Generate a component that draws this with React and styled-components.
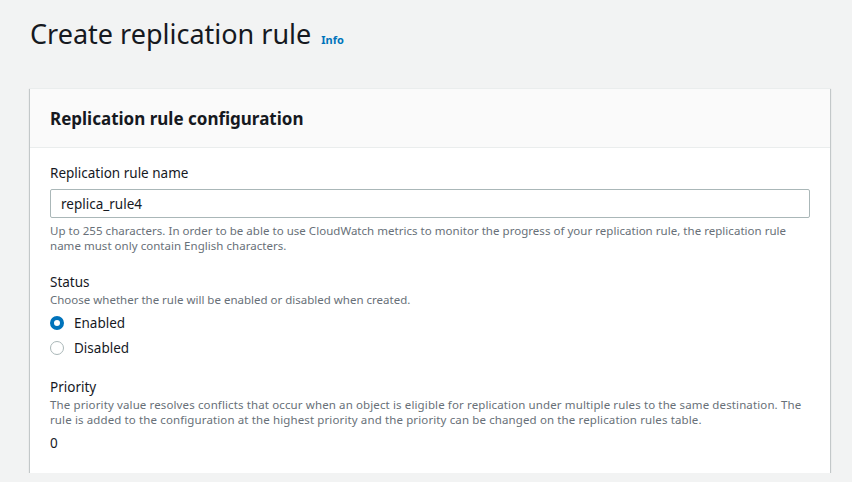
import React from "react";
import styled, { createGlobalStyle } from "styled-components";

const Global = createGlobalStyle`
  html, body { margin: 0; padding: 0; background: #f2f3f3; }
  body { font-family: "Noto Sans", "Open Sans", sans-serif; color: #16191f; }
`;

const Page = styled.div`
  padding: 14px 22px 0 30px;
  width: 852px;
  box-sizing: border-box;
`;

const TitleRow = styled.div`
  display: flex;
  align-items: baseline;
  gap: 10px;
  height: 74px;
`;

const Title = styled.h1`
  margin: 0;
  font-size: 27px;
  font-weight: 400;
  line-height: 40px;
  color: #16191f;
`;

const InfoLink = styled.a`
  font-size: 11px;
  font-weight: 700;
  color: #0073bb;
  text-decoration: none;
`;

const Panel = styled.section`
  width: 800px;
  background: #fff;
  box-shadow: 0 1px 1px 0 rgba(0, 28, 36, 0.3), 1px 1px 1px 0 rgba(0, 28, 36, 0.15), -1px 1px 1px 0 rgba(0, 28, 36, 0.15);
  border-top: 1px solid #eaeded;
`;

const PanelHeader = styled.div`
  background: #fafafa;
  border-bottom: 1px solid #eaeded;
  height: 58px;
  display: flex;
  align-items: center;
  padding: 0 20px;
`;

const PanelTitle = styled.h2`
  margin: 0;
  font-size: 17px;
  font-weight: 700;
  color: #16191f;
`;

const PanelBody = styled.div`
  padding: 16px 20px 20px;
  display: flex;
  flex-direction: column;
`;

const Field = styled.div`
  display: flex;
  flex-direction: column;
  margin-bottom: ${(p) => p.$mb || 0}px;
`;

const Label = styled.label`
  font-size: 13.5px;
  line-height: 19px;
  color: #16191f;
`;

const Desc = styled.div`
  font-size: 11.5px;
  line-height: 15px;
  color: #687078;
  letter-spacing: ${(p) => p.$ls || 0}px;
`;

const Input = styled.div`
  margin-top: 6px;
  height: 29px;
  width: 760px;
  box-sizing: border-box;
  border: 1px solid #aab7b8;
  border-radius: 2px;
  display: flex;
  align-items: center;
  padding: 0 10px;
  font-size: 13.5px;
  color: #16191f;
`;

const Helper = styled(Desc)`
  margin-top: 5px;
`;

const RadioGroup = styled.div`
  display: flex;
  flex-direction: column;
  gap: 6px;
  margin-top: 6px;
`;

const RadioRow = styled.div`
  display: flex;
  align-items: center;
  gap: 10px;
  height: 19px;
  font-size: 13.5px;
  color: #16191f;
`;

const RadioDot = styled.span`
  width: 14px;
  height: 14px;
  box-sizing: border-box;
  border-radius: 50%;
  border: ${(p) => (p.$checked ? "4px solid #0073bb" : "1px solid #aab7b8")};
  background: #fff;
`;

const Value = styled.div`
  margin-top: 7px;
  font-size: 13.5px;
  line-height: 19px;
  color: #16191f;
`;

export default function App() {
  return (
    <>
      <Global />
      <Page>
        <TitleRow>
          <Title>Create replication rule</Title>
          <InfoLink href="#">Info</InfoLink>
        </TitleRow>
        <Panel>
          <PanelHeader>
            <PanelTitle>Replication rule configuration</PanelTitle>
          </PanelHeader>
          <PanelBody>
            <Field $mb={20}>
              <Label>Replication rule name</Label>
              <Input>replica_rule4</Input>
              <Helper $ls={0.03}>
                Up to 255 characters. In order to be able to use CloudWatch metrics to monitor the progress of your replication rule, the replication rule name must only contain English characters.
              </Helper>
            </Field>
            <Field $mb={21}>
              <Label>Status</Label>
              <Desc>Choose whether the rule will be enabled or disabled when created.</Desc>
              <RadioGroup>
                <RadioRow>
                  <RadioDot $checked />
                  Enabled
                </RadioRow>
                <RadioRow>
                  <RadioDot />
                  Disabled
                </RadioRow>
              </RadioGroup>
            </Field>
            <Field>
              <Label>Priority</Label>
              <Desc $ls={0.12}>
                The priority value resolves conflicts that occur when an object is eligible for replication under multiple rules to the same destination. The rule is added to the configuration at the highest priority and the priority can be changed on the replication rules table.
              </Desc>
              <Value>0</Value>
            </Field>
          </PanelBody>
        </Panel>
      </Page>
    </>
  );
}
